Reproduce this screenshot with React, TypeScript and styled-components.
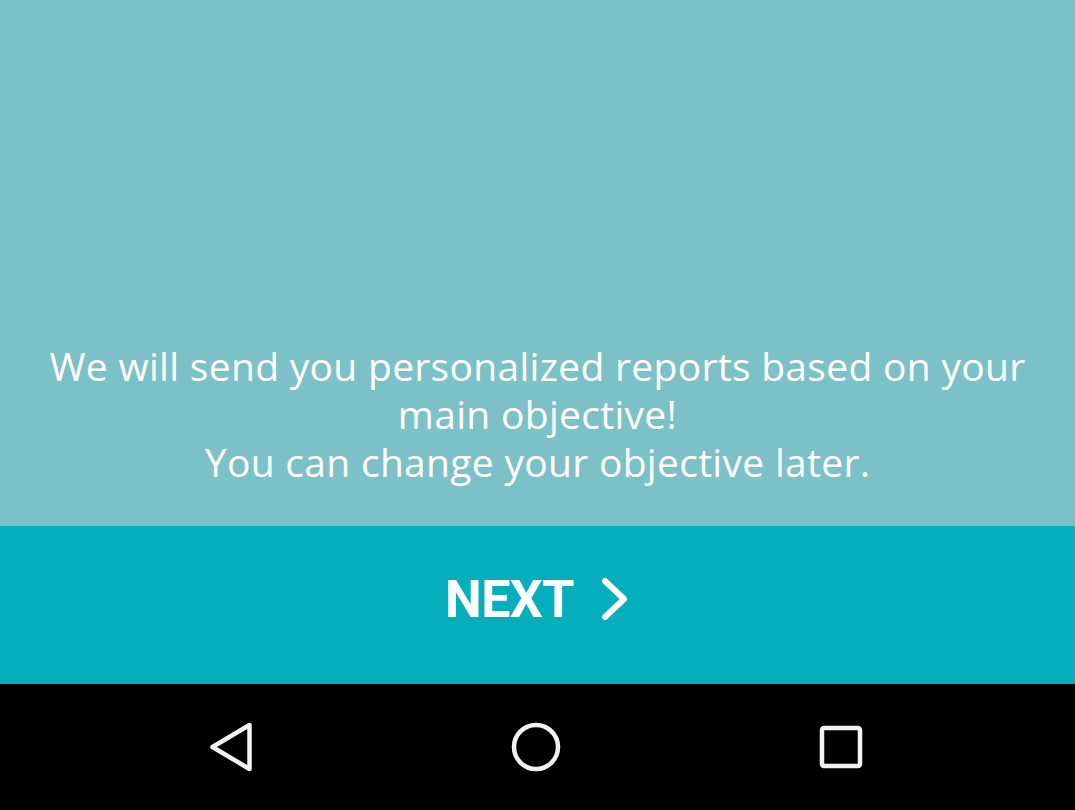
import React from "react";
import styled, { createGlobalStyle } from "styled-components";

const Global = createGlobalStyle`
  html, body { margin: 0; padding: 0; height: 100%; }
  body { background: #000; }
  #root { height: 100%; }
`;

const Screen = styled.div`
  display: flex;
  flex-direction: column;
  width: 1075px;
  height: 810px;
  overflow: hidden;
`;

const Content = styled.div`
  flex: 1;
  background: #7cc1c7;
  display: flex;
  flex-direction: column;
  justify-content: flex-end;
  align-items: center;
  padding-bottom: 40px;
`;

const Message = styled.p`
  margin: 0;
  color: #ffffff;
  font-family: "Open Sans", "Noto Sans", sans-serif;
  font-size: 39px;
  line-height: 48px;
  text-align: center;
  letter-spacing: 0.3px;
`;

const NextButton = styled.button`
  height: 158px;
  flex: none;
  border: none;
  background: #05aebb;
  display: flex;
  align-items: center;
  justify-content: center;
  gap: 26px;
  padding: 0 0 12px 0;
  cursor: pointer;
`;

const NextLabel = styled.span`
  color: #ffffff;
  font-family: Roboto, "Liberation Sans", sans-serif;
  font-weight: 700;
  font-size: 52px;
  letter-spacing: -0.6px;
`;

const NavBar = styled.nav`
  height: 126px;
  flex: none;
  background: #000;
  display: grid;
  grid-template-columns: repeat(3, 1fr);
  align-items: center;
  justify-items: center;
  padding: 0 82px 0 78px;
`;

const NavIcon = styled.svg`
  width: 60px;
  height: 60px;
  display: block;
`;

export default function App() {
  return (
    <>
      <Global />
      <Screen>
        <Content>
          <Message>
            We will send you personalized reports based on your
            <br />
            main objective!
            <br />
            You can change your objective later.
          </Message>
        </Content>
        <NextButton>
          <NextLabel>NEXT</NextLabel>
          <svg width="30" height="44" viewBox="0 0 30 44">
            <path
              d="M5 4 L24 22 L5 40"
              fill="none"
              stroke="#fff"
              strokeWidth="6"
              strokeLinecap="round"
              strokeLinejoin="round"
            />
          </svg>
        </NextButton>
        <NavBar>
          <NavIcon viewBox="0 0 60 60">
            <path
              d="M48.5 8 L48.5 52 L11.5 30 Z"
              fill="none"
              stroke="#f2f2f2"
              strokeWidth="4.5"
              strokeLinejoin="round"
            />
          </NavIcon>
          <NavIcon viewBox="0 0 60 60">
            <circle cx="30" cy="30" r="22" fill="none" stroke="#f2f2f2" strokeWidth="4.5" />
          </NavIcon>
          <NavIcon viewBox="0 0 60 60">
            <rect x="11" y="11" width="38" height="38" rx="2" fill="none" stroke="#f2f2f2" strokeWidth="4.5" />
          </NavIcon>
        </NavBar>
      </Screen>
    </>
  );
}
